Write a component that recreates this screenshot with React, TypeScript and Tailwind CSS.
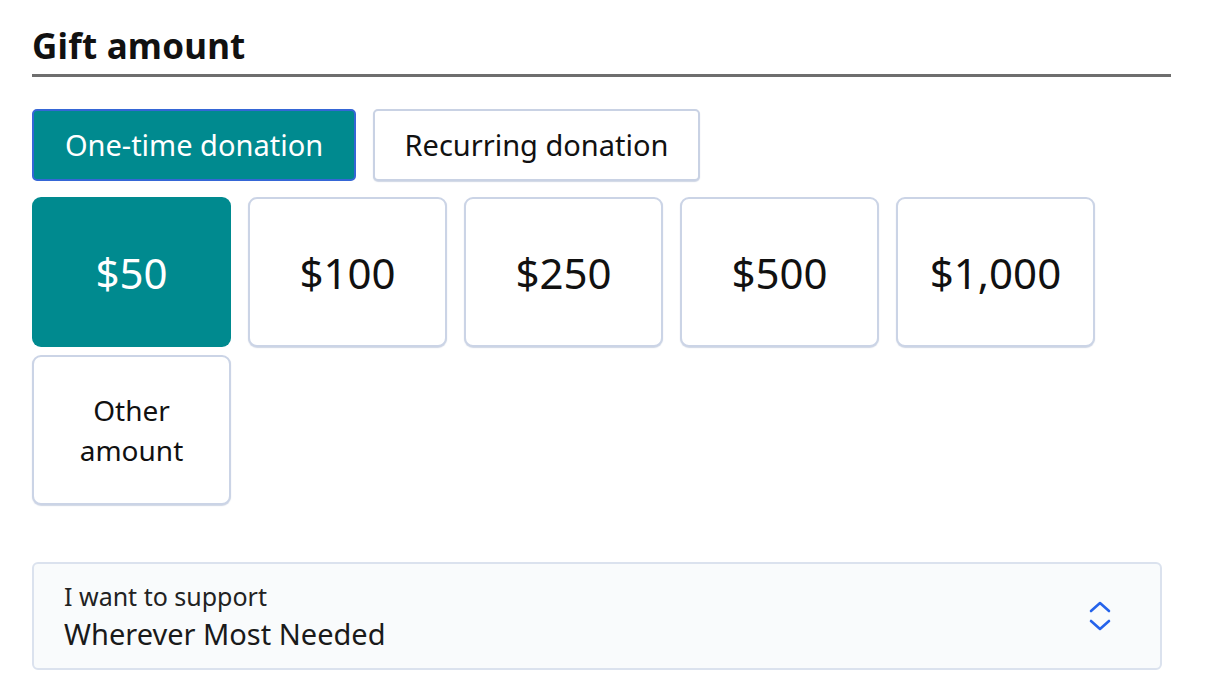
import React, { useState } from 'react';

const amounts = ['$50', '$100', '$250', '$500', '$1,000'];

export default function App() {
  const [frequency, setFrequency] = useState<'once' | 'recurring'>('once');
  const [amount, setAmount] = useState('$50');

  return (
    <div className="min-h-screen bg-white text-black font-['Noto_Sans',sans-serif]">
      <div className="w-[1140px] pl-[32px] pt-[22px]">
        {/* Heading */}
        <h2 className="text-[35px] font-bold leading-[48px] tracking-[0.2px] text-[#111]">Gift amount</h2>
        <div className="mt-[4px] h-[3px] w-[1139px] bg-[#6e6e6e]" />

        {/* Frequency toggle */}
        <div className="mt-[32px] flex gap-[17px]">
          <button
            onClick={() => setFrequency('once')}
            className={
              frequency === 'once'
                ? 'h-[72px] w-[324px] rounded-[5px] border-2 border-[#3566d6] bg-[#008a8f] text-[29px] text-white'
                : 'h-[72px] w-[324px] rounded-[5px] border-2 border-[#c9d2e4] bg-white text-[29px] text-[#111] shadow-[0_1px_1px_rgba(120,140,180,0.35)]'
            }
          >
            One-time donation
          </button>
          <button
            onClick={() => setFrequency('recurring')}
            className={
              frequency === 'recurring'
                ? 'h-[72px] w-[327px] rounded-[5px] border-2 border-[#3566d6] bg-[#008a8f] text-[29px] text-white'
                : 'h-[72px] w-[327px] rounded-[5px] border-2 border-[#c9d2e4] bg-white text-[29px] text-[#111] shadow-[0_1px_1px_rgba(120,140,180,0.35)]'
            }
          >
            Recurring donation
          </button>
        </div>

        {/* Amount tiles */}
        <div className="mt-[16px] flex w-[1130px] flex-wrap gap-x-[17px] gap-y-[8px]">
          {amounts.map((a) => (
            <button
              key={a}
              onClick={() => setAmount(a)}
              className={
                amount === a
                  ? 'h-[150px] w-[199px] rounded-[9px] bg-[#008a8f] text-[42px] text-white'
                  : 'h-[150px] w-[199px] rounded-[9px] border-2 border-[#cbd4e6] bg-white text-[42px] text-[#111] shadow-[0_1px_1px_rgba(120,140,180,0.35)]'
              }
            >
              {a}
            </button>
          ))}
          <button
            onClick={() => setAmount('other')}
            className="h-[150px] w-[199px] rounded-[9px] border-2 border-[#cbd4e6] bg-white text-[28px] leading-[40px] text-[#111] shadow-[0_1px_1px_rgba(120,140,180,0.35)]"
          >
            Other
            <br />
            amount
          </button>
        </div>

        {/* Designation select */}
        <div className="mt-[57px] flex h-[108px] w-[1130px] items-center justify-between rounded-[6px] border-2 border-[#dbe2ee] bg-[#f9fbfc] pl-[30px] pr-[48px]">
          <div className="flex flex-col">
            <span className="text-[25px] leading-[32px] text-[#222]">I want to support</span>
            <span className="mt-[4px] text-[29px] leading-[36px] text-[#1a1a1a]">Wherever Most Needed</span>
          </div>
          <svg width="24" height="32" viewBox="0 0 24 32" fill="none" stroke="#2563eb" strokeWidth="2.6" strokeLinecap="round" strokeLinejoin="round">
            <path d="M3 11 L12 3 L21 11" />
            <path d="M3 21 L12 29 L21 21" />
          </svg>
        </div>
      </div>
    </div>
  );
}
